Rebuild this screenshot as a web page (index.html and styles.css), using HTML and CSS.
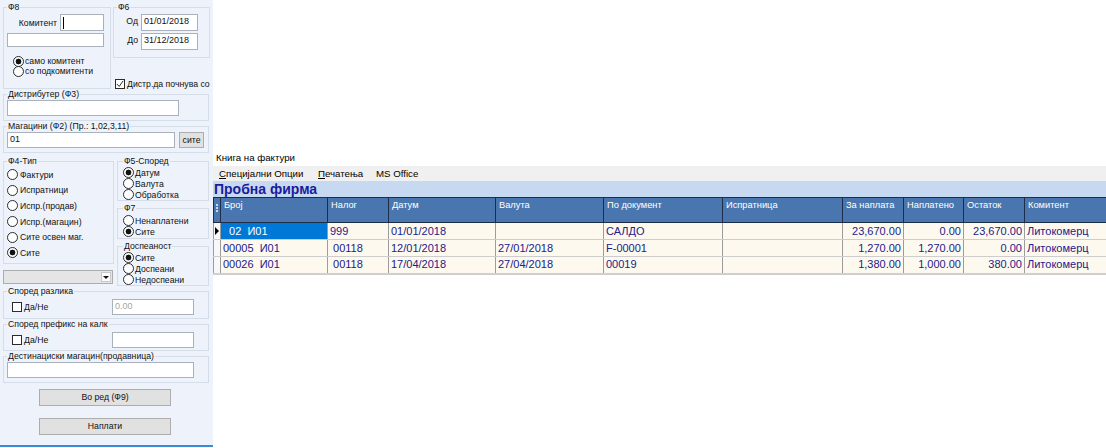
FILE: index.html
```html
<!DOCTYPE html>
<html lang="mk">
<head>
    <meta charset="UTF-8">
    <title>Книга на фактури</title>
    <link rel="stylesheet" href="styles.css">
</head>
<body>
<div class="window">
    <div class="panel">
        <div class="top">
            <fieldset class="grp f8">
                <legend>Ф8</legend>
                <div class="krow"><label>Комитент</label><div class="inp kinp"><span class="caret"></span></div></div>
                <div class="inp wide"></div>
                <div class="radios r8">
                    <div class="rb on">само комитент</div>
                    <div class="rb">со подкомитенти</div>
                </div>
            </fieldset>
            <div class="topright">
                <fieldset class="grp f6">
                    <legend>Ф6</legend>
                    <div class="drow"><label>Од</label><div class="inp date">01/01/2018</div></div>
                    <div class="drow"><label>До</label><div class="inp date">31/12/2018</div></div>
                </fieldset>
                <div class="cb on distr"><i><svg viewBox="0 0 10 10" width="8" height="8"><polyline points="1,5 4,8 9,1" fill="none" stroke="#222" stroke-width="1.2"/></svg></i>Дистр.да почнува со</div>
            </div>
        </div>

        <fieldset class="grp full fd">
            <legend>Дистрибутер (Ф3)</legend>
            <div class="inp distinp"></div>
        </fieldset>

        <fieldset class="grp full fm">
            <legend>Магацини (Ф2) (Пр.: 1,02,3,11)</legend>
            <div class="mrow"><div class="inp maginp">01</div><div class="btn site">сите</div></div>
        </fieldset>

        <div class="mid">
            <div class="midleft">
                <fieldset class="grp f4">
                    <legend>Ф4-Тип</legend>
                    <div class="rb">Фактури</div>
                    <div class="rb">Испратници</div>
                    <div class="rb">Испр.(продав)</div>
                    <div class="rb">Испр.(магацин)</div>
                    <div class="rb">Сите освен маг.</div>
                    <div class="rb on">Сите</div>
                </fieldset>
                <div class="combo"><span class="arrow"></span></div>
            </div>
            <div class="midright">
                <fieldset class="grp f5">
                    <legend>Ф5-Според</legend>
                    <div class="rb on">Датум</div>
                    <div class="rb">Валута</div>
                    <div class="rb">Обработка</div>
                </fieldset>
                <fieldset class="grp f7">
                    <legend>Ф7</legend>
                    <div class="rb">Ненаплатени</div>
                    <div class="rb on">Сите</div>
                </fieldset>
                <fieldset class="grp fdosp">
                    <legend>Доспеаност</legend>
                    <div class="rb on">Сите</div>
                    <div class="rb">Доспеани</div>
                    <div class="rb">Недоспеани</div>
                </fieldset>
            </div>
        </div>

        <fieldset class="grp full fr">
            <legend>Според разлика</legend>
            <div class="crow"><div class="cb"><i></i>Да/Не</div><div class="inp small grey">0.00</div></div>
        </fieldset>
        <fieldset class="grp full fp">
            <legend>Според префикс на калк</legend>
            <div class="crow"><div class="cb"><i></i>Да/Не</div><div class="inp small"></div></div>
        </fieldset>
        <fieldset class="grp full fdest">
            <legend>Дестинациски магацин(продавница)</legend>
            <div class="inp destinp"></div>
        </fieldset>

        <div class="btn big first">Во ред (Ф9)</div>
        <div class="btn big">Наплати</div>
    </div>

    <div class="main">
        <div class="title">Книга на фактури</div>
        <div class="menu">
            <span class="m1"><u>С</u>пецијални Опции</span>
            <span class="m2"><u>П</u>ечатења</span>
            <span class="m3">MS Office</span>
        </div>
        <div class="heading">Пробна фирма</div>
        <table class="grid">
            <colgroup>
                <col style="width:7px"><col style="width:107px"><col style="width:61px"><col style="width:107px">
                <col style="width:108px"><col style="width:119px"><col style="width:120px"><col style="width:61px">
                <col style="width:60px"><col style="width:61px"><col style="width:82px">
            </colgroup>
            <thead>
                <tr>
                    <th class="rh"><span class="dots"></span></th>
                    <th>Број</th><th>Налог</th><th>Датум</th><th>Валута</th><th>По документ</th>
                    <th>Испратница</th><th>За наплата</th><th>Наплатено</th><th>Остаток</th><th>Комитент</th>
                </tr>
            </thead>
            <tbody>
                <tr>
                    <td class="rh"><span class="tri"></span></td>
                    <td class="sel">  02  И01</td><td>999</td><td>01/01/2018</td><td></td><td>САЛДО</td><td></td>
                    <td class="num">23,670.00</td><td class="num">0.00</td><td class="num">23,670.00</td><td>Литокомерц</td>
                </tr>
                <tr>
                    <td class="rh"></td>
                    <td>00005  И01</td><td> 00118</td><td>12/01/2018</td><td>27/01/2018</td><td>F-00001</td><td></td>
                    <td class="num">1,270.00</td><td class="num">1,270.00</td><td class="num">0.00</td><td>Литокомерц</td>
                </tr>
                <tr>
                    <td class="rh"></td>
                    <td>00026  И01</td><td> 00118</td><td>17/04/2018</td><td>27/04/2018</td><td>00019</td><td></td>
                    <td class="num">1,380.00</td><td class="num">1,000.00</td><td class="num">380.00</td><td>Литокомерц</td>
                </tr>
            </tbody>
        </table>
    </div>
</div>
</body>
</html>
```

FILE: styles.css
```css
body {
    margin: 0;
    font-family: "Liberation Sans", Arial, sans-serif;
    background: #fff;
}
.window {
    display: flex;
    width: 1106px;
    height: 448px;
    overflow: hidden;
}

/* left filter panel */
.panel {
    flex: none;
    width: 213px;
    height: 447px;
    box-sizing: border-box;
    padding: 2px 0 0 3px;
    background: #eef3fb;
    border-bottom: 2px solid #3b8ad3;
    font-size: 8.7px;
    color: #111;
}
.grp {
    margin: 0;
    padding: 0 4px 0 3px;
    border: 1px solid #d5dde8;
    min-width: 0;
    box-sizing: border-box;
}
.grp legend {
    padding: 0 1px;
    line-height: 11px;
}
.inp {
    background: #fff;
    border: 1px solid #a9b1bc;
    box-sizing: border-box;
    height: 16px;
    padding: 0 2px;
    font-size: 9px;
    line-height: 13px;
    color: #111;
}
.btn {
    background: #e1e1e1;
    border: 1px solid #adadad;
    box-sizing: border-box;
    text-align: center;
}

.top {
    display: flex;
    gap: 2px;
}
.f8 {
    width: 108px;
    height: 87px;
    padding: 1px 6px 0 3px;
}
.krow {
    display: flex;
    justify-content: flex-end;
    align-items: center;
    gap: 3px;
    height: 17px;
}
.kinp {
    width: 44px;
    height: 17px;
    position: relative;
}
.caret {
    position: absolute;
    left: 2px;
    top: 2px;
    width: 1px;
    height: 12px;
    background: #000;
}
.wide {
    width: 97px;
    height: 14px;
    margin-top: 2px;
}
.r8 {
    margin-top: 9px;
    padding-left: 6px;
}
.r8 .rb {
    height: 10px;
}

.f6 {
    width: 97px;
    height: 56px;
    padding: 1px 11px 0 3px;
}
.drow {
    display: flex;
    justify-content: flex-end;
    align-items: center;
    gap: 3px;
    height: 17px;
    margin-bottom: 2px;
}
.drow label {
    margin-top: -3px;
}
.date {
    width: 57px;
    height: 17px;
}
.distr {
    margin: 20px 0 0 2px;
    height: 11px;
}

.full {
    width: 206px;
}
.fd {
    height: 32px;
}
.distinp {
    width: 172px;
}
.fm {
    height: 32px;
}
.mrow {
    display: flex;
    gap: 4px;
}
.maginp {
    width: 169px;
}
.site {
    width: 25px;
    height: 16px;
    line-height: 14px;
    font-size: 8.7px;
}

.mid {
    display: flex;
    gap: 3px;
    margin-top: 3px;
}
.midleft {
    width: 111px;
}
.midright {
    width: 92px;
}
.f4 {
    height: 108px;
}
.f4 .rb {
    height: 15.6px;
    gap: 2px;
}
.combo {
    width: 110px;
    height: 14px;
    margin-top: 6px;
    background: #e5e5e5;
    border: 1px solid #adadad;
    box-sizing: border-box;
    display: flex;
    justify-content: flex-end;
    padding: 1px;
}
.arrow {
    width: 10px;
    height: 10px;
    background: #fbfbfb;
    border: 1px solid #c8c8c8;
    box-sizing: border-box;
    display: flex;
    align-items: center;
    justify-content: center;
}
.arrow::after {
    content: "";
    border-left: 3px solid transparent;
    border-right: 3px solid transparent;
    border-top: 3px solid #111;
}
.f5 {
    height: 45px;
    padding-left: 5px;
}
.f7 {
    height: 36px;
    margin-top: 2px;
    padding-left: 5px;
    padding-top: 1px;
}
.fdosp {
    height: 45px;
    margin-top: 2px;
    padding-left: 5px;
}
.midright .rb {
    height: 11px;
}

.rb {
    display: flex;
    align-items: center;
    gap: 1px;
    white-space: nowrap;
}
.rb::before {
    content: "";
    flex: none;
    width: 9px;
    height: 9px;
    border: 1px solid #2b2b2b;
    border-radius: 50%;
    background: #fff;
}
.rb.on::before {
    background: radial-gradient(circle, #111 0 2.6px, #fff 3.2px);
}
.cb {
    display: flex;
    align-items: center;
    gap: 2px;
    white-space: nowrap;
}
.cb i {
    flex: none;
    width: 10px;
    height: 10px;
    border: 1px solid #2b2b2b;
    background: #fff;
    box-sizing: border-box;
    display: flex;
    align-items: center;
    justify-content: center;
}

.fr {
    height: 33px;
    padding-right: 14px;
}
.fp {
    height: 32px;
    padding-right: 14px;
}
.crow {
    display: flex;
    align-items: center;
    justify-content: space-between;
    margin-top: 2px;
    padding-left: 5px;
}
.small {
    width: 82px;
}
.grey {
    color: #a5a5a5;
}
.fdest {
    height: 32px;
}
.destinp {
    width: 187px;
}
.big {
    width: 132px;
    height: 17px;
    line-height: 15px;
    margin: 12px 0 0 36px;
    font-size: 8.7px;
}
.big.first {
    margin-top: 6px;
}

/* right side: invoice book */
.main {
    flex: 1;
    min-width: 0;
    padding-top: 150px;
    font-size: 9.7px;
    color: #000;
}
.title {
    height: 16px;
    line-height: 16px;
    padding-left: 3px;
}
.menu {
    display: flex;
    height: 15px;
    line-height: 15px;
    background: #f0f0f0;
    padding-left: 6px;
}
.m1 {
    width: 99px;
}
.m2 {
    width: 58px;
}
.heading {
    height: 16px;
    line-height: 16px;
    background: #c6d9f0;
    color: #1b1b9e;
    font-weight: bold;
    font-size: 14px;
    padding-left: 1px;
}
.grid {
    border-collapse: collapse;
    table-layout: fixed;
    width: 893px;
    font-size: 11px;
    color: #22208c;
    border-bottom: 2px solid #cfcfcf;
}
.grid th {
    height: 25px;
    box-sizing: border-box;
    padding: 2px 3px 0;
    background: #4a76b0;
    color: #fff;
    font-weight: normal;
    font-size: 9.3px;
    text-align: left;
    vertical-align: top;
    border: 1px solid #1e2d47;
    white-space: nowrap;
    overflow: hidden;
}
.grid td {
    height: 17px;
    box-sizing: border-box;
    padding: 0 2px;
    background: #fdf9ee;
    border-left: 1px solid #9c9c9c;
    border-right: 1px solid #9c9c9c;
    border-bottom: 1px solid #cdcdcd;
    white-space: pre;
    overflow: hidden;
    line-height: 15px;
}
.grid td.num {
    text-align: right;
}
.grid td.sel {
    background: #0078d7;
    color: #fff;
}
.grid .rh {
    padding: 0;
}
.grid td.rh {
    background: #f8f8f8;
}
.dots {
    display: block;
    width: 2px;
    height: 8px;
    margin: 6px 0 0 2px;
    border-left: 2px dotted #c9d6ea;
    box-sizing: border-box;
}
.tri {
    display: block;
    margin-left: 1px;
    width: 0;
    height: 0;
    border-top: 4px solid transparent;
    border-bottom: 4px solid transparent;
    border-left: 4px solid #000;
}
```
